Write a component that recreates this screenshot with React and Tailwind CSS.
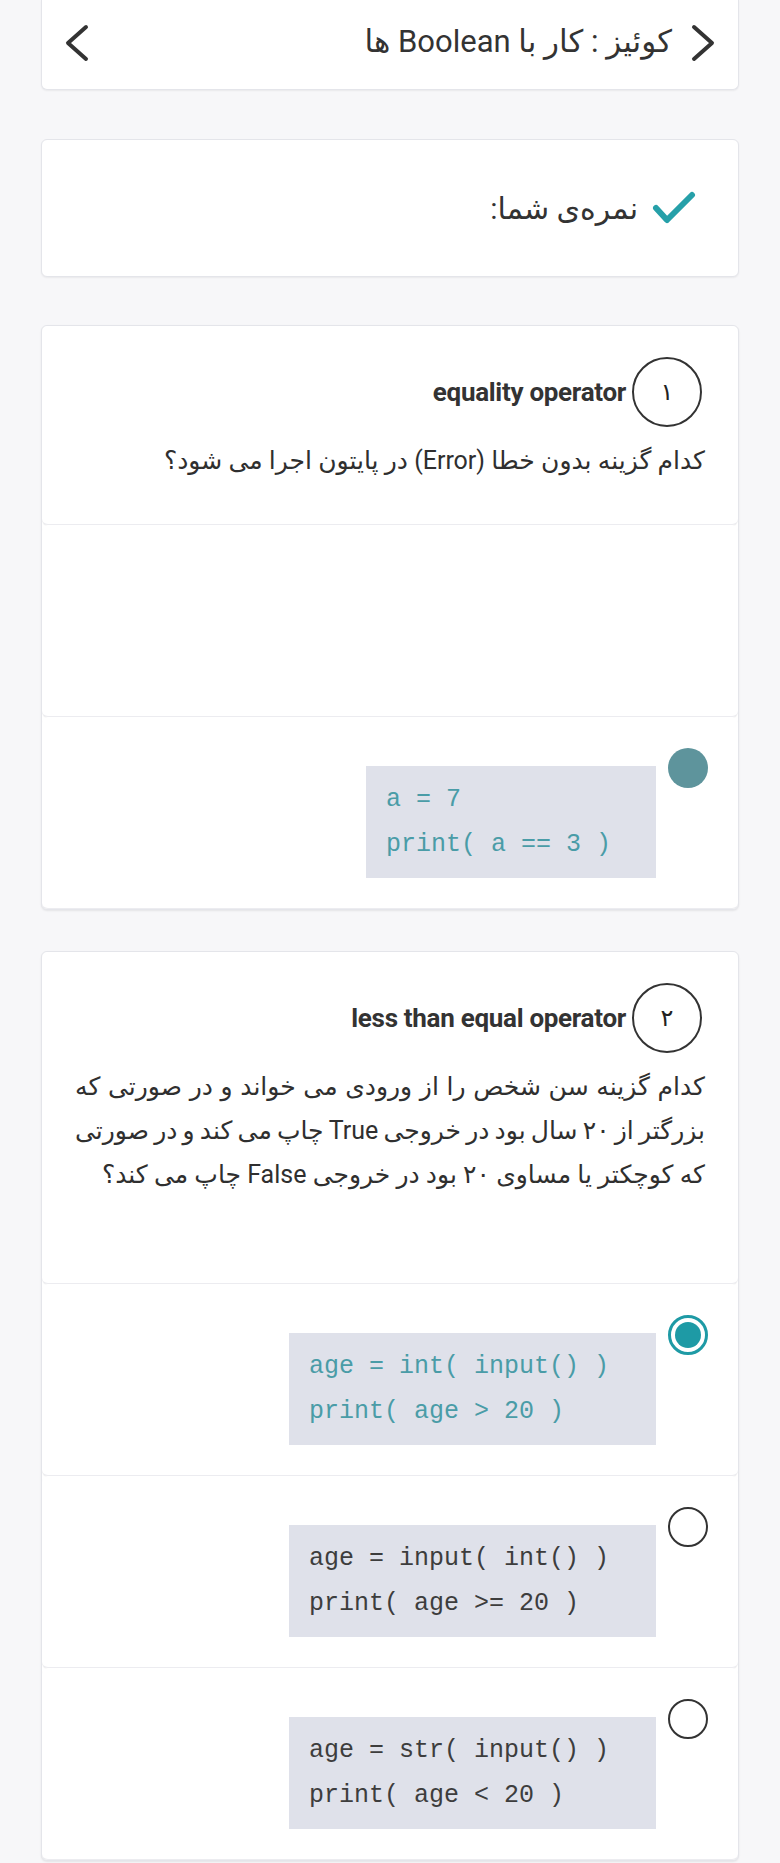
import React from "react";

function ChevronLeft() {
  return (
    <svg width="26" height="40" viewBox="0 0 26 40" fill="none">
      <polyline points="22,4 4,20 22,36" stroke="#333" strokeWidth="4" strokeLinecap="round" strokeLinejoin="round" />
    </svg>
  );
}
function ChevronRight() {
  return (
    <svg width="26" height="40" viewBox="0 0 26 40" fill="none">
      <polyline points="4,4 22,20 4,36" stroke="#333" strokeWidth="4" strokeLinecap="round" strokeLinejoin="round" />
    </svg>
  );
}
function Check() {
  return (
    <svg width="44" height="34" viewBox="0 0 44 34" fill="none">
      <polyline points="4,17 15,29 40,4" stroke="#26a0a9" strokeWidth="6" strokeLinecap="round" strokeLinejoin="round" />
    </svg>
  );
}

function Radio({ state }) {
  if (state === "filled") {
    return <div className="w-[40px] h-[40px] shrink-0 rounded-full bg-[#5e949c]" />;
  }
  if (state === "checked") {
    return (
      <div className="w-[40px] h-[40px] shrink-0 rounded-full border-[3px] border-[#1e9aa5] bg-white flex items-center justify-center">
        <div className="w-[26px] h-[26px] rounded-full bg-[#1e9aa5]" />
      </div>
    );
  }
  return <div className="w-[40px] h-[40px] shrink-0 rounded-full border-[2.5px] border-[#333] bg-white" />;
}

function Code({ lines, width, teal }) {
  return (
    <div
      dir="ltr"
      className={`mt-[18px] ${width} bg-[#dfe1ea] px-[20px] py-[11px] font-['Liberation_Mono',monospace] text-[25px] leading-[45px] ${teal ? "text-[#4a9ca7]" : "text-[#3d3d3d]"}`}
    >
      {lines.map((l, i) => (
        <div key={i} className="whitespace-pre">{l}</div>
      ))}
    </div>
  );
}

function Option({ radio, lines, width, teal, empty }) {
  return (
    <div className="h-[192px] rounded-md bg-white shadow-[0_1px_1px_rgba(0,0,0,0.07)] border-b border-[#ececf0]">
      {!empty && (
        <div className="flex flex-row items-start gap-[12px] pt-[31px] pr-[30px]">
          <Radio state={radio} />
          <Code lines={lines} width={width} teal={teal} />
        </div>
      )}
    </div>
  );
}

function QuestionHeader({ num, title, lines, pb }) {
  return (
    <div className={`rounded-md bg-white shadow-[0_1px_1px_rgba(0,0,0,0.07)] border-b border-[#ececf0] pt-[31px] ${pb}`}>
      <div className="flex flex-row items-center gap-[6px] pr-[36px]">
        <div className="w-[70px] h-[70px] rounded-full border-2 border-[#333] flex items-center justify-center text-[24px] text-[#222]">
          {num}
        </div>
        <div dir="ltr" className="font-['Roboto',sans-serif] font-bold text-[26px] text-[#333] tracking-[-0.3px]">
          {title}
        </div>
      </div>
      <div className="mt-[12px] px-[33px] text-[25px] leading-[44px] text-[#2f2f2f]">
        {lines.map((l, i) => (
          <div
            key={i}
            className={`whitespace-nowrap ${i < lines.length - 1 ? "text-justify [text-align-last:justify] [word-spacing:-2px]" : "text-right"}`}
          >
            {l}
          </div>
        ))}
      </div>
    </div>
  );
}

export default function App() {
  return (
    <div dir="rtl" className="min-h-[1863px] bg-[#f7f7f9] px-[41px] pb-[3px] font-['Roboto','DejaVu_Sans',sans-serif] text-[#333]">
      {/* header */}
      <div className="h-[90px] bg-white border-x border-b border-[#e4e5ea] rounded-b-md shadow-[0_1px_2px_rgba(0,0,0,0.06)] flex items-center justify-between pr-[22px] pl-[22px] pb-[4px]">
        <div className="flex items-center gap-[18px]">
          <ChevronRight />
          <span className="text-[31px] text-[#333]">کوئیز : کار با Boolean ها</span>
        </div>
        <ChevronLeft />
      </div>

      {/* score */}
      <div className="mt-[49px] h-[138px] bg-white border border-[#e4e5ea] rounded-md shadow-[0_1px_2px_rgba(0,0,0,0.06)] flex items-center pr-[42px] gap-[14px]">
        <Check />
        <span className="text-[30px] text-[#333]">نمره‌ی شما:</span>
      </div>

      {/* Q1 */}
      <div className="mt-[48px] bg-white border border-[#e4e5ea] rounded-md shadow-[0_1px_2px_rgba(0,0,0,0.08)] overflow-hidden">
        <QuestionHeader
          num="۱"
          title="equality operator"
          lines={["کدام گزینه بدون خطا (Error) در پایتون اجرا می شود؟"]}
          pb="pb-[41px]"
        />
        <Option empty />
        <Option radio="filled" lines={["a = 7", "print( a == 3 )"]} width="w-[290px]" teal />
      </div>

      {/* Q2 */}
      <div className="mt-[41px] bg-white border border-[#e4e5ea] rounded-md shadow-[0_1px_2px_rgba(0,0,0,0.08)] overflow-hidden">
        <QuestionHeader
          num="۲"
          title="less than equal operator"
          lines={[
            "کدام گزینه سن شخص را از ورودی می خواند و در صورتی که",
            "بزرگتر از ۲۰ سال بود در خروجی True چاپ می کند و در صورتی",
            "که کوچکتر یا مساوی ۲۰ بود در خروجی False چاپ می کند؟",
          ]}
          pb="pb-[86px]"
        />
        <Option radio="checked" lines={["age = int( input() )", "print( age > 20 )"]} width="w-[367px]" teal />
        <Option radio="empty" lines={["age = input( int() )", "print( age >= 20 )"]} width="w-[367px]" />
        <Option radio="empty" lines={["age = str( input() )", "print( age < 20 )"]} width="w-[367px]" />
      </div>
    </div>
  );
}
